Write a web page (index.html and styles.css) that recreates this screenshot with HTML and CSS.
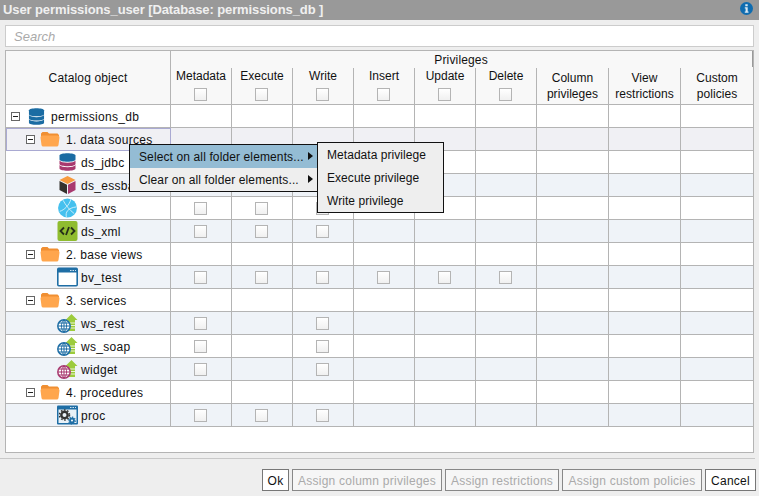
FILE: index.html
```html
<!DOCTYPE html>
<html lang="en">
<head>
    <meta charset="UTF-8">
    <title>User permissions</title>
    <link rel="stylesheet" href="styles.css">
</head>
<body>
    <svg class="defs" xmlns="http://www.w3.org/2000/svg">
        <symbol id="i-folder" viewBox="0 0 20 16">
            <path d="M1 4V2.500L2.500 1h5L9 2.500h8.500L19 4v2H1z" fill="#f08f32"/>
            <path d="M0.500 6.500Q0.500 4.500 2.500 4.500h15q2 0 2 2L18.500 14q-.2 1.500-1.800 1.500H3.300q-1.600 0-1.800-1.500z" fill="#ffa64d"/>
        </symbol>
        <symbol id="i-db" viewBox="0 0 18 20">
            <path d="M1 3.500C1 .5 17 .5 17 3.500V7.500C17 10.500 1 10.500 1 7.500z" fill="#1b6ca3"/>
            <path d="M1 8.500C3 11.500 15 11.500 17 8.500V12C17 15 1 15 1 12z" fill="#1b6ca3"/>
            <path d="M1 13C3 16 15 16 17 13V16.500C17 19.500 1 19.500 1 16.500z" fill="#1b6ca3"/>
        </symbol>
        <symbol id="i-jdbc" viewBox="0 0 18 20">
            <path d="M1 3.500C1 .5 17 .5 17 3.500V7.500C17 10.500 1 10.500 1 7.500z" fill="#1b6ca3"/>
            <path d="M1 8.500C3 11.500 15 11.500 17 8.500V12C17 15 1 15 1 12z" fill="#a8396f"/>
            <path d="M1 13C3 16 15 16 17 13V16.500C17 19.500 1 19.500 1 16.500z" fill="#a8396f"/>
        </symbol>
        <symbol id="i-cube" viewBox="0 0 18 20">
            <path d="M9 1l8 4-8 4-8-4z" fill="#f79a3e"/>
            <path d="M1 6l7.500 3.700V19L1 15z" fill="#35322f"/>
            <path d="M17 6L9.500 9.700V19L17 15z" fill="#a8396f"/>
        </symbol>
        <symbol id="i-ball" viewBox="0 0 18 18">
            <circle cx="9" cy="9" r="8.500" fill="#45c0ee"/>
            <path d="M2 12C6 11 11 6 12 1M5 2c2 4 6 9 10 12M8 17c-1-4 1-8 9-9" fill="none" stroke="#d8f2fb" stroke-width=".8"/>
        </symbol>
        <symbol id="i-xml" viewBox="0 0 20 20">
            <rect width="20" height="20" rx="2" fill="#8fbc2f"/>
            <path d="M6.500 6.500L3 10l3.500 3.500M13.500 6.500L17 10l-3.500 3.500M11.500 6L8.500 14" fill="none" stroke="#26301a" stroke-width="1.800"/>
        </symbol>
        <symbol id="i-view" viewBox="0 0 21 19">
            <rect x=".8" y=".8" width="19.400" height="17.400" rx="1" fill="#fff" stroke="#1f6ea5" stroke-width="1.600"/>
            <path d="M1 1h19v4H1z" fill="#1f6ea5"/>
            <path d="M13 3h1.500M15.500 3H17M18 3h1" stroke="#cfe3f0" stroke-width="1"/>
        </symbol>
        <symbol id="i-ws" viewBox="0 0 21 20">
            <path d="M14.500 1l6 6H18v11h-7V7H8.500z" fill="#9ccb3c"/>
            <path d="M11 10h7M11 12.500h7M11 15h7" stroke="#fff" stroke-width=".8"/>
            <circle cx="7" cy="13" r="6.200" fill="#fff" stroke="#1f6ea5" stroke-width="1.500"/>
            <path d="M1 13h12M2 10h10M2 16h10M7 7v12M7 7C3.500 10 3.500 16 7 19M7 7c3.500 3 3.500 9 0 12" fill="none" stroke="#1f6ea5" stroke-width="1"/>
        </symbol>
        <symbol id="i-widget" viewBox="0 0 21 20">
            <path d="M14.500 1l6 6H18v11h-7V7H8.500z" fill="#9ccb3c"/>
            <path d="M11 10h7M11 12.500h7M11 15h7" stroke="#fff" stroke-width=".8"/>
            <circle cx="7" cy="13" r="6.200" fill="#fff" stroke="#a8396f" stroke-width="1.500"/>
            <path d="M1 13h12M2 10h10M2 16h10M7 7v12M7 7C3.500 10 3.500 16 7 19M7 7c3.500 3 3.500 9 0 12" fill="none" stroke="#a8396f" stroke-width="1"/>
        </symbol>
        <symbol id="i-proc" viewBox="0 0 21 19">
            <rect width="21" height="19" rx="1" fill="#1f6ea5"/>
            <rect x="1.500" y="4" width="18" height="13.500" fill="#e9f1f7"/>
            <path d="M13 2h1.500M15.500 2H17M18 2h1" stroke="#cfe3f0" stroke-width="1"/>
            <circle cx="7.500" cy="9.500" r="3.200" fill="none" stroke="#333" stroke-width="2.400"/>
            <circle cx="7.500" cy="9.500" r="5" fill="none" stroke="#333" stroke-width="1.500" stroke-dasharray="1.600 1.600"/>
            <circle cx="15" cy="15" r="2" fill="none" stroke="#1f6ea5" stroke-width="1.800"/>
            <circle cx="15" cy="15" r="3.400" fill="none" stroke="#1f6ea5" stroke-width="1.200" stroke-dasharray="1.300 1.300"/>
        </symbol>
    </svg>

    <div class="dialog">
        <div class="title-bar">
            <span class="title">User permissions_user [Database: permissions_db ]</span>
            <svg class="info" viewBox="0 0 13 13"><circle cx="6.500" cy="6.500" r="6.500" fill="#0f6cb0"/><path d="M5.300 2.200h2.400v2H5.300zM4.800 5.200h2.900v4.300h.8v1.300h-3.700V9.500h.8V6.500h-.8z" fill="#dbe9f3"/></svg>
        </div>

        <input class="search" type="text" placeholder="Search">

        <div class="grid-wrap">
            <table class="grid">
                <colgroup>
                    <col class="col-name">
                    <col class="col-priv" span="6">
                    <col class="col-wide" span="2">
                    <col class="col-last">
                </colgroup>
                <thead>
                    <tr class="head-top">
                        <th rowspan="2" class="catalog">Catalog object</th>
                        <th colspan="9" class="group">Privileges</th>
                    </tr>
                    <tr class="head-cols">
                        <th><div class="hlabel">Metadata</div><span class="cb"></span></th>
                        <th><div class="hlabel">Execute</div><span class="cb"></span></th>
                        <th><div class="hlabel">Write</div><span class="cb"></span></th>
                        <th><div class="hlabel">Insert</div><span class="cb"></span></th>
                        <th><div class="hlabel">Update</div><span class="cb"></span></th>
                        <th><div class="hlabel">Delete</div><span class="cb"></span></th>
                        <th class="two">Column privileges</th>
                        <th class="two">View restrictions</th>
                        <th class="two">Custom policies</th>
                    </tr>
                </thead>
                <tbody>
                    <tr>
                        <td><div class="node root"><span class="toggle"></span><svg class="ic-db"><use href="#i-db"/></svg><span>permissions_db</span></div></td>
                        <td></td><td></td><td></td><td></td><td></td><td></td><td></td><td></td><td></td>
                    </tr>
                    <tr class="alt selected">
                        <td><div class="node folder"><span class="toggle"></span><svg class="ic-folder"><use href="#i-folder"/></svg><span>1. data sources</span></div></td>
                        <td></td><td></td><td></td><td></td><td></td><td></td><td></td><td></td><td></td>
                    </tr>
                    <tr>
                        <td><div class="node leaf"><svg class="ic-leaf"><use href="#i-jdbc"/></svg><span>ds_jdbc</span></div></td>
                        <td><span class="cb"></span></td><td><span class="cb"></span></td><td><span class="cb"></span></td><td></td><td></td><td></td><td></td><td></td><td></td>
                    </tr>
                    <tr class="alt">
                        <td><div class="node leaf"><svg class="ic-leaf"><use href="#i-cube"/></svg><span>ds_essbase</span></div></td>
                        <td><span class="cb"></span></td><td><span class="cb"></span></td><td><span class="cb"></span></td><td></td><td></td><td></td><td></td><td></td><td></td>
                    </tr>
                    <tr>
                        <td><div class="node leaf"><svg class="ic-leaf"><use href="#i-ball"/></svg><span>ds_ws</span></div></td>
                        <td><span class="cb"></span></td><td><span class="cb"></span></td><td><span class="cb"></span></td><td></td><td></td><td></td><td></td><td></td><td></td>
                    </tr>
                    <tr class="alt">
                        <td><div class="node leaf"><svg class="ic-leaf"><use href="#i-xml"/></svg><span>ds_xml</span></div></td>
                        <td><span class="cb"></span></td><td><span class="cb"></span></td><td><span class="cb"></span></td><td></td><td></td><td></td><td></td><td></td><td></td>
                    </tr>
                    <tr>
                        <td><div class="node folder"><span class="toggle"></span><svg class="ic-folder"><use href="#i-folder"/></svg><span>2. base views</span></div></td>
                        <td></td><td></td><td></td><td></td><td></td><td></td><td></td><td></td><td></td>
                    </tr>
                    <tr class="alt">
                        <td><div class="node leaf"><svg class="ic-leaf"><use href="#i-view"/></svg><span>bv_test</span></div></td>
                        <td><span class="cb"></span></td><td><span class="cb"></span></td><td><span class="cb"></span></td><td><span class="cb"></span></td><td><span class="cb"></span></td><td><span class="cb"></span></td><td></td><td></td><td></td>
                    </tr>
                    <tr>
                        <td><div class="node folder"><span class="toggle"></span><svg class="ic-folder"><use href="#i-folder"/></svg><span>3. services</span></div></td>
                        <td></td><td></td><td></td><td></td><td></td><td></td><td></td><td></td><td></td>
                    </tr>
                    <tr class="alt">
                        <td><div class="node leaf"><svg class="ic-leaf"><use href="#i-ws"/></svg><span>ws_rest</span></div></td>
                        <td><span class="cb"></span></td><td></td><td><span class="cb"></span></td><td></td><td></td><td></td><td></td><td></td><td></td>
                    </tr>
                    <tr>
                        <td><div class="node leaf"><svg class="ic-leaf"><use href="#i-ws"/></svg><span>ws_soap</span></div></td>
                        <td><span class="cb"></span></td><td></td><td><span class="cb"></span></td><td></td><td></td><td></td><td></td><td></td><td></td>
                    </tr>
                    <tr class="alt">
                        <td><div class="node leaf"><svg class="ic-leaf"><use href="#i-widget"/></svg><span>widget</span></div></td>
                        <td><span class="cb"></span></td><td></td><td><span class="cb"></span></td><td></td><td></td><td></td><td></td><td></td><td></td>
                    </tr>
                    <tr>
                        <td><div class="node folder"><span class="toggle"></span><svg class="ic-folder"><use href="#i-folder"/></svg><span>4. procedures</span></div></td>
                        <td></td><td></td><td></td><td></td><td></td><td></td><td></td><td></td><td></td>
                    </tr>
                    <tr class="alt">
                        <td><div class="node leaf"><svg class="ic-leaf"><use href="#i-proc"/></svg><span>proc</span></div></td>
                        <td><span class="cb"></span></td><td><span class="cb"></span></td><td><span class="cb"></span></td><td></td><td></td><td></td><td></td><td></td><td></td>
                    </tr>
                </tbody>
            </table>
            <div class="scroll-stub"></div>
        </div>

        <div class="footer">
            <button class="btn btn-ok">Ok</button>
            <button class="btn btn-col" disabled>Assign column privileges</button>
            <button class="btn btn-res" disabled>Assign restrictions</button>
            <button class="btn btn-pol" disabled>Assign custom policies</button>
            <button class="btn btn-cancel">Cancel</button>
        </div>
    </div>

    <div class="menu menu-main">
        <div class="menu-item active">Select on all folder elements...<span class="arrow"></span></div>
        <div class="menu-item">Clear on all folder elements...<span class="arrow"></span></div>
    </div>
    <div class="menu menu-sub">
        <div class="menu-item">Metadata privilege</div>
        <div class="menu-item">Execute privilege</div>
        <div class="menu-item">Write privilege</div>
    </div>
</body>
</html>
```

FILE: styles.css
```css
html, body { margin: 0; padding: 0; height: 100%; overflow: hidden; }
body { font-family: "Liberation Sans", Arial, sans-serif; font-size: 12px; letter-spacing: .15px; color: #111; background: #eee; position: relative; }
.defs { display: none; }

.dialog { display: flex; flex-direction: column; height: 496px; }

.title-bar { height: 20px; background: #999; display: flex; align-items: center; justify-content: space-between; padding: 0 6px 0 3px; flex: none; }
.title { color: #f0f0f0; font-size: 13px; font-weight: bold; letter-spacing: -.1px; margin-top: -1px; }
.info { width: 13px; height: 13px; margin-top: -3px; }

.search { flex: none; box-sizing: border-box; width: 749px; height: 22px; margin: 5px 0 0 5px; padding: 0 8px; border: 1px solid #ccc; background: #fff; font: italic 13px "Liberation Sans", Arial, sans-serif; outline: none; }
.search::placeholder { color: #aaa; opacity: 1; }

.grid-wrap { flex: none; box-sizing: border-box; width: 749px; height: 403px; margin: 3px 0 0 5px; border: 1px solid #b4b4b4; background: #fff; position: relative; }
.grid { border-collapse: separate; border-spacing: 0; table-layout: fixed; width: 747px; }
.col-name { width: 165px; }
.col-priv { width: 61px; }
.col-wide { width: 72px; }
.col-last { width: 72px; }

.grid th { font-weight: normal; background: #f8f8f8; padding: 0; text-align: center; vertical-align: top; }
.head-top th { height: 16px; line-height: 16px; padding-top: 1px; }
.head-top .group { padding-right: 2px; }
.catalog { border-right: 1px solid #b4b4b4; border-bottom: 1px solid #b4b4b4; vertical-align: middle !important; }
.head-cols th { height: 36px; border-right: 1px solid #b4b4b4; border-bottom: 1px solid #b4b4b4; padding-right: 1px; }
.head-cols th:last-child { border-right: none; }
.head-cols .hlabel { line-height: 16px; margin: 0 -1px 3px 0; letter-spacing: 0; }
.head-cols .cb { margin: 0; }
.head-cols .two { vertical-align: middle; line-height: 16px; padding: 0 2px; letter-spacing: .05px; }

.grid td { height: 22px; padding: 0 1px 0 0; text-align: center; border-right: 1px solid #b4b4b4; border-bottom: 1px solid #b4b4b4; background: #fff; }
.grid td:last-child { border-right: none; }
.alt td { background: #eff3f8; }
.selected td { background: #f0f0f4; }
.selected td:first-child { outline: 1px solid #a9a9d2; outline-offset: -1px; }

.node { display: flex; align-items: center; height: 22px; text-align: left; white-space: nowrap; letter-spacing: .3px; }
.node > span:last-child { padding-top: 2px; }
.root { padding-left: 5px; }
.folder { padding-left: 20px; }
.leaf { padding-left: 51px; }
.toggle { box-sizing: border-box; width: 9px; height: 9px; border: 1px solid #666; background: #fff; position: relative; flex: none; }
.toggle::after { content: ""; position: absolute; left: 1px; right: 1px; top: 3px; height: 1px; background: #222; }
.ic-db { width: 17px; height: 19px; margin: 0 6px 0 8px; }
.ic-folder { width: 20px; height: 16px; margin: 0 6px 0 5px; }
.ic-leaf { width: 21px; height: 20px; margin-right: 3px; flex: none; }

.cb { display: inline-block; box-sizing: border-box; width: 13px; height: 13px; border: 1px solid #b4b4b4; background: linear-gradient(#fff, #f0f0f0); vertical-align: middle; }

.scroll-stub { position: absolute; right: 0; top: 0; width: 1px; height: 16px; background: #999; }

.footer { flex: 1; margin: 5px 4px 0 0; border-top: 1px solid #c8c8c8; display: flex; justify-content: flex-end; align-items: flex-start; gap: 3px; padding: 10px 0 0; }
.btn { box-sizing: border-box; height: 22px; padding: 1px 0 0; border: 1px solid #777; background: #fff; color: #111; font: 12px "Liberation Sans", Arial, sans-serif; letter-spacing: .25px; text-align: center; }
.btn:disabled { color: #aaa; background: #f6f6f6; border-color: #888; }
.btn-ok { width: 27px; }
.btn-col { width: 150px; }
.btn-res { width: 114px; }
.btn-pol { width: 140px; }
.btn-cancel { width: 51px; margin-right: -1px; }

.menu { position: absolute; box-sizing: border-box; background: #eee; border: 1px solid #111; white-space: nowrap; }
.menu-main { left: 129px; top: 144px; width: 190px; height: 48px; letter-spacing: .12px; }
.menu-sub { left: 317px; top: 142px; width: 127px; height: 71px; letter-spacing: .05px; }
.menu-item { height: 23px; line-height: 24px; padding-left: 9px; position: relative; }
.menu-item.active { background: #94bcd4; }
.arrow { position: absolute; left: 178px; top: 7px; border-left: 5px solid #111; border-top: 4px solid transparent; border-bottom: 4px solid transparent; }
```
